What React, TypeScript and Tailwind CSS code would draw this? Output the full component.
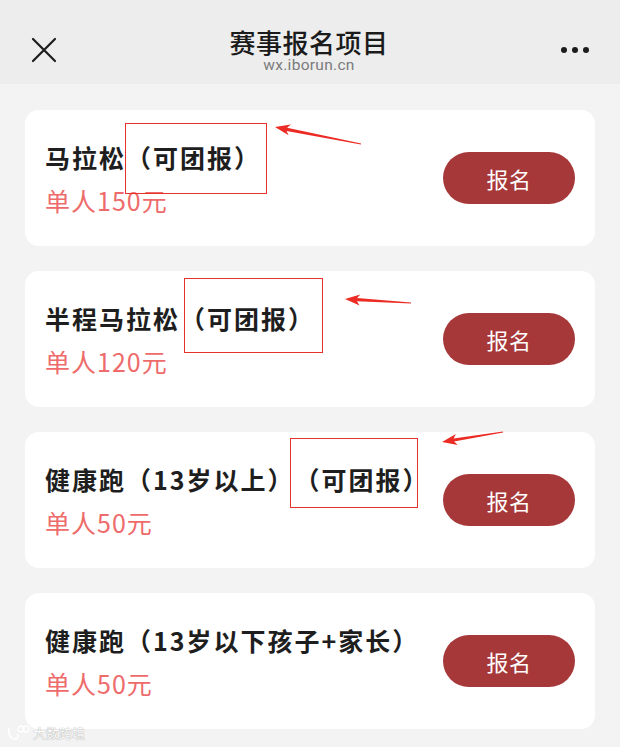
import React from "react";

type Pt = [number, number];

function Arrow({ tail, tip }: { tail: Pt; tip: Pt }) {
  const dx = tip[0] - tail[0];
  const dy = tip[1] - tail[1];
  const len = Math.hypot(dx, dy);
  const ux = dx / len;
  const uy = dy / len;
  const nx = -uy;
  const ny = ux;
  const headLen = 15;
  const headHalf = 5.5;
  const bx = tip[0] - ux * headLen;
  const by = tip[1] - uy * headLen;
  const shaftNear = 1.6;
  const shaftFar = 0.4;
  const pts: Pt[] = [
    tip,
    [bx + nx * headHalf, by + ny * headHalf],
    [bx + ux * 3 + nx * shaftNear, by + uy * 3 + ny * shaftNear],
    [tail[0] + nx * shaftFar, tail[1] + ny * shaftFar],
    [tail[0] - nx * shaftFar, tail[1] - ny * shaftFar],
    [bx + ux * 3 - nx * shaftNear, by + uy * 3 - ny * shaftNear],
    [bx - nx * headHalf, by - ny * headHalf],
  ];
  return (
    <polygon
      points={pts.map((p) => `${p[0].toFixed(1)},${p[1].toFixed(1)}`).join(" ")}
      fill="#ec2b24"
    />
  );
}

type Item = {
  title: string;
  price: string;
  box?: { left: number; top: number; w: number; h: number };
  arrow?: { tail: Pt; tip: Pt };
};

const items: Item[] = [
  {
    title: "马拉松（可团报）",
    price: "单人150元",
    box: { left: 100, top: 13, w: 142, h: 71 },
    arrow: { tail: [336, 34], tip: [250, 17] },
  },
  {
    title: "半程马拉松（可团报）",
    price: "单人120元",
    box: { left: 159, top: 7, w: 139, h: 75 },
    arrow: { tail: [386, 32], tip: [320, 28] },
  },
  {
    title: "健康跑（13岁以上）（可团报）",
    price: "单人50元",
    box: { left: 265, top: 6, w: 128, h: 70 },
    arrow: { tail: [478, 0], tip: [417, 10] },
  },
  {
    title: "健康跑（13岁以下孩子+家长）",
    price: "单人50元",
  },
];

const cjk = "font-['Noto_Sans_CJK_SC','Noto_Sans',sans-serif] [text-spacing-trim:space-all]";

export default function App() {
  return (
    <div className={`relative min-h-screen w-[620px] bg-[#f3f3f3] ${cjk}`}>
      {/* Header */}
      <div className="relative flex h-[84px] items-start justify-between bg-[#ededed] px-[31px]">
        <div className="mt-[37px] flex h-[26px] w-[26px] items-center justify-center">
          <svg width="26" height="26" viewBox="0 0 26 26">
            <path d="M2 2 L24 24 M24 2 L2 24" stroke="#1c1c1c" strokeWidth="2.2" strokeLinecap="round" />
          </svg>
        </div>
        <div className="flex flex-col items-center pt-[27px]">
          <div className="text-[26px] leading-[30px] font-medium text-[#1b1b1b] tracking-[0.5px]">赛事报名项目</div>
          <div className="font-['Roboto','Liberation_Sans',sans-serif] text-[15.5px] leading-[16px] text-[#7b7b7b] tracking-[0.3px]">
            wx.iborun.cn
          </div>
        </div>
        <div className="mt-[47px] flex w-[28px] items-center justify-between">
          <span className="h-[6px] w-[6px] rounded-full bg-[#1c1c1c]" />
          <span className="h-[6px] w-[6px] rounded-full bg-[#1c1c1c]" />
          <span className="h-[6px] w-[6px] rounded-full bg-[#1c1c1c]" />
        </div>
      </div>

      {/* List */}
      <div className="flex flex-col gap-[25px] px-[25px] pt-[26px] pb-[18px]">
        {items.map((it, i) => (
          <div
            key={i}
            className="relative flex h-[136px] items-center justify-between rounded-[14px] bg-white pl-[20px] pr-[20px]"
          >
            <div className="flex flex-col">
              <div className="text-[25px] leading-[34px] font-bold text-[#1e1e1e] whitespace-nowrap tracking-[2px]">
                {it.title}
              </div>
              <div className="mt-[9px] text-[25px] leading-[34px] text-[#ee6b6b] tracking-[1px]">{it.price}</div>
            </div>
            <button className="flex h-[52px] w-[132px] shrink-0 items-center justify-center rounded-full bg-[#a6383a] text-[22px] text-white tracking-[0.5px]">
              报名
            </button>
            {it.box && (
              <div
                className="pointer-events-none absolute border-[1.5px] border-[#e8312b]"
                style={{ left: it.box.left, top: it.box.top, width: it.box.w, height: it.box.h }}
              />
            )}
            {it.arrow && (
              <svg
                className="pointer-events-none absolute left-0 top-[-12px] overflow-visible"
                width="570"
                height="60"
                viewBox="0 -12 570 60"
              >
                <Arrow tail={it.arrow.tail} tip={it.arrow.tip} />
              </svg>
            )}
          </div>
        ))}
      </div>

      {/* Watermark */}
      <div className="pointer-events-none absolute left-[6px] top-[724px] flex items-center gap-[3px]">
        <svg width="24" height="18" viewBox="0 0 24 18">
          <path d="M3 4 C2 10 4 15 9 15 C12 15 13 12 11 10" stroke="#ffffff" strokeWidth="1.6" fill="none" />
          <circle cx="15" cy="5" r="3" stroke="#ffffff" strokeWidth="1.3" fill="none" />
          <circle cx="20" cy="5" r="3" stroke="#ffffff" strokeWidth="1.3" fill="none" />
        </svg>
        <span className="text-[13px] leading-[18px] text-white [text-shadow:0_0_1px_rgba(0,0,0,0.5)]">大数跨境</span>
      </div>
    </div>
  );
}
